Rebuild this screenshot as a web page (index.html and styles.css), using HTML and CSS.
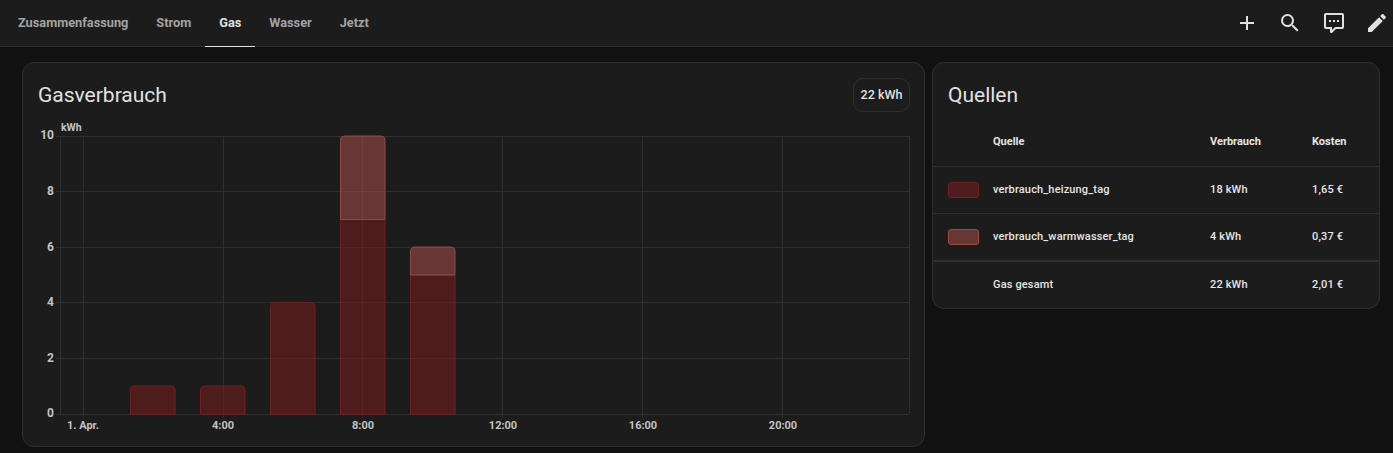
FILE: index.html
```html
<!DOCTYPE html>
<html lang="en">
<head>
  <meta charset="UTF-8">
  <title>Energie</title>
  <link rel="stylesheet" href="styles.css">
</head>
<body>
  <header class="top-bar">
    <nav class="tabs">
      <a class="tab">Zusammenfassung</a>
      <a class="tab">Strom</a>
      <a class="tab tab-active">Gas</a>
      <a class="tab">Wasser</a>
      <a class="tab">Jetzt</a>
    </nav>
    <div class="actions">
      <svg class="icon" viewBox="0 0 24 24"><path d="M19,13H13V19H11V13H5V11H11V5H13V11H19V13Z"/></svg>
      <svg class="icon icon-search" viewBox="0 0 24 24"><path d="M9.5,3A6.5,6.5 0 0,1 16,9.5C16,11.11 15.41,12.59 14.44,13.73L14.71,14H15.5L20.5,19L19,20.5L14,15.5V14.71L13.73,14.44C12.59,15.41 11.11,16 9.5,16A6.5,6.5 0 0,1 3,9.5A6.5,6.5 0 0,1 9.5,3M9.5,5C7,5 5,7 5,9.5C5,12 7,14 9.5,14C12,14 14,12 14,9.5C14,7 12,5 9.5,5Z"/></svg>
      <svg class="icon" viewBox="0 0 24 24"><path d="M9,22A1,1 0 0,1 8,21V18H4A2,2 0 0,1 2,16V4C2,2.89 2.9,2 4,2H20A2,2 0 0,1 22,4V16A2,2 0 0,1 20,18H13.9L10.2,21.71C10,21.9 9.75,22 9.5,22V22H9M10,16V19.08L13.08,16H20V4H4V16H10M17,11H15V9H17V11M13,11H11V9H13V11M9,11H7V9H9V11Z"/></svg>
      <svg class="icon" viewBox="0 0 24 24"><path d="M20.71,7.04C21.1,6.65 21.1,6 20.71,5.63L18.37,3.29C18,2.9 17.35,2.9 16.96,3.29L15.12,5.12L18.87,8.87M3,17.25V21H6.75L17.81,9.93L14.06,6.18L3,17.25Z"/></svg>
    </div>
  </header>

  <main class="cards">
    <section class="card chart-card">
      <div class="chart-head">
        <h2 class="card-title">Gasverbrauch</h2>
        <div class="chip">22 kWh</div>
      </div>
      <svg class="chart" viewBox="23 118 901 328">
        <g class="grid">
          <path d="M56 136.5H909M56 191.5H909M56 247.5H909M56 302.5H909M56 358.5H909M56 414.5H909"/>
          <path d="M60.5 136V414M83.5 136V418M223.5 136V418M362.5 136V418M502.5 136V418M642.5 136V418M782.5 136V418M909.5 136V414"/>
        </g>
        <g class="bar-a">
          <path d="M130.5 414.5V390a4 4 0 0 1 4-4H171a4 4 0 0 1 4 4V414.5Z"/>
          <path d="M200.5 414.5V390a4 4 0 0 1 4-4H241a4 4 0 0 1 4 4V414.5Z"/>
          <path d="M270.5 414.5V306.5a4 4 0 0 1 4-4H311a4 4 0 0 1 4 4V414.5Z"/>
          <path d="M340.5 414.5V219.5H385V414.5Z"/>
          <path d="M410.5 414.5V275H455V414.5Z"/>
        </g>
        <g class="bar-b">
          <path d="M340.5 219.5V140a4 4 0 0 1 4-4H381a4 4 0 0 1 4 4V219.5Z"/>
          <path d="M410.5 275V251a4 4 0 0 1 4-4H451a4 4 0 0 1 4 4V275Z"/>
        </g>
        <g class="axis-y">
          <text x="54" y="139">10</text>
          <text x="54" y="195">8</text>
          <text x="54" y="251">6</text>
          <text x="54" y="306">4</text>
          <text x="54" y="362">2</text>
          <text x="54" y="417">0</text>
        </g>
        <text class="axis-unit" x="61" y="131">kWh</text>
        <g class="axis-x">
          <text x="83" y="429">1. Apr.</text>
          <text x="223" y="429">4:00</text>
          <text x="363" y="429">8:00</text>
          <text x="503" y="429">12:00</text>
          <text x="643" y="429">16:00</text>
          <text x="783" y="429">20:00</text>
        </g>
      </svg>
    </section>

    <section class="card sources-card">
      <h2 class="card-title sources-title">Quellen</h2>
      <div class="row row-head">
        <span></span><span>Quelle</span><span>Verbrauch</span><span>Kosten</span>
      </div>
      <div class="row">
        <span class="swatch swatch-a"></span><span>verbrauch_heizung_tag</span><span>18 kWh</span><span>1,65 €</span>
      </div>
      <div class="row">
        <span class="swatch swatch-b"></span><span>verbrauch_warmwasser_tag</span><span>4 kWh</span><span>0,37 €</span>
      </div>
      <div class="row row-total">
        <span></span><span>Gas gesamt</span><span>22 kWh</span><span>2,01 €</span>
      </div>
    </section>
  </main>
</body>
</html>
```

FILE: styles.css
```css
html, body {
  margin: 0;
  height: 453px;
  overflow: hidden;
}

body {
  background-color: #111;
  color: #e1e1e1;
  font-family: Roboto, "Liberation Sans", sans-serif;
}

.top-bar {
  height: 46px;
  display: flex;
  justify-content: space-between;
  background-color: #1c1c1c;
  border-bottom: 1px solid #2f2f2f;
}

.tabs {
  display: flex;
  padding-left: 4px;
}

.tab {
  height: 46px;
  line-height: 45px;
  padding: 0 14px;
  font-size: 12.75px;
  font-weight: 700;
  color: #a3a3a3;
  box-sizing: border-box;
}

.tab-active {
  height: 47px;
  color: #e1e1e1;
  border-bottom: 1px solid #e1e1e1;
}

.actions {
  display: flex;
  align-items: center;
  gap: 19px;
  padding-right: 4px;
}

.icon {
  width: 24px;
  height: 24px;
  fill: #e1e1e1;
}

.icon-search {
  margin-right: 1px;
}

.cards {
  display: grid;
  grid-template-columns: 903px 448px;
  gap: 7px;
  align-items: start;
  padding: 15px 0 0 22px;
}

.card {
  background-color: #1c1c1c;
  border: 1px solid #2f2f2f;
  border-radius: 12px;
  box-sizing: border-box;
}

.card-title {
  margin: 0;
  font-size: 21px;
  font-weight: 400;
  line-height: 32px;
  color: #e1e1e1;
}

/* Chart card */
.chart-card {
  height: 385px;
}

.chart-head {
  height: 55px;
  display: flex;
  justify-content: space-between;
  align-items: flex-start;
  padding: 15px 14px 0 15px;
  box-sizing: border-box;
}

.chart-head .card-title {
  margin-top: 1px;
}

.chip {
  width: 57px;
  height: 34px;
  line-height: 32px;
  text-align: center;
  font-size: 12.5px;
  font-weight: 500;
  border: 1px solid #2f2f2f;
  border-radius: 10px;
  box-sizing: border-box;
}

.chart {
  display: block;
  width: 901px;
  height: 328px;
}

.grid path {
  fill: none;
  stroke: #2f2f2f;
  stroke-width: 1;
}

.bar-a path {
  fill: rgba(130, 28, 32, 0.5);
  stroke: #6e2024;
  stroke-width: 1;
}

.bar-b path {
  fill: rgba(175, 82, 76, 0.5);
  stroke: #8f4a44;
  stroke-width: 1;
}

.chart text {
  font-size: 12px;
  font-weight: 700;
  fill: #c4c4c4;
}

.axis-x text {
  text-anchor: middle;
  font-size: 11px;
}

.axis-y text {
  text-anchor: end;
}

.chart .axis-unit {
  font-size: 10.5px;
}

/* Sources card */
.sources-card {
  height: 247px;
}

.sources-title {
  padding: 16px 15px 0;
  height: 50px;
}

.row {
  display: grid;
  grid-template-columns: 45px 217px 102px 1fr;
  align-items: center;
  height: 47px;
  padding-left: 15px;
  padding-bottom: 1px;
  font-size: 11px;
  font-weight: 500;
  letter-spacing: 0.15px;
  color: #e6e6e6;
  border-bottom: 1px solid #2f2f2f;
  box-sizing: border-box;
}

.row-head {
  height: 38px;
  padding-bottom: 0;
  align-items: start;
  line-height: 26px;
  font-weight: 700;
  letter-spacing: 0;
}

.row-total {
  border-bottom: none;
  border-top: 1px solid #2f2f2f;
}

.swatch {
  width: 31px;
  height: 16px;
  margin-top: 1px;
  border-radius: 3px;
  box-sizing: border-box;
}

.swatch-a {
  background-color: rgba(130, 28, 32, 0.5);
  border: 1px solid #6e2024;
}

.swatch-b {
  background-color: rgba(175, 82, 76, 0.5);
  border: 1px solid #a04a44;
}
```
